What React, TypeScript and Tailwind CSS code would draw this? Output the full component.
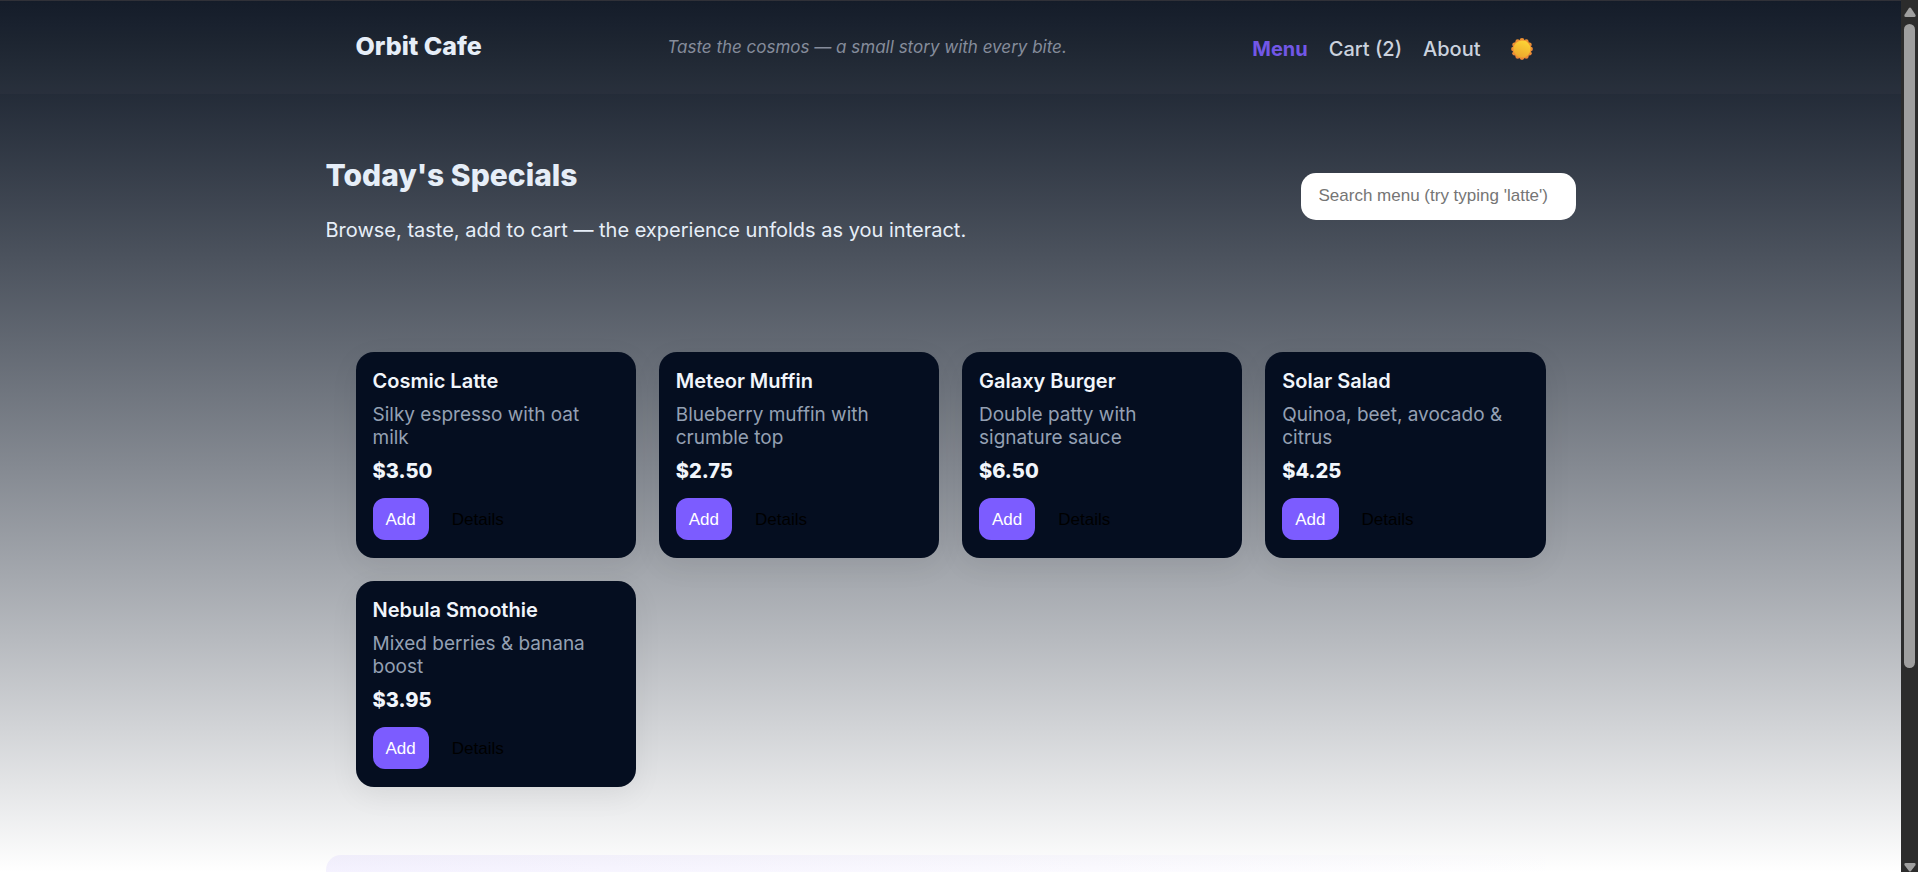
import React from "react";

type Item = { name: string; description: string; price: string };

const items: Item[] = [
  { name: "Cosmic Latte", description: "Silky espresso with oat milk", price: "$3.50" },
  { name: "Meteor Muffin", description: "Blueberry muffin with crumble top", price: "$2.75" },
  { name: "Galaxy Burger", description: "Double patty with signature sauce", price: "$6.50" },
  { name: "Solar Salad", description: "Quinoa, beet, avocado & citrus", price: "$4.25" },
  { name: "Nebula Smoothie", description: "Mixed berries & banana boost", price: "$3.95" },
];

const petals = Array.from({ length: 12 }, (_, i) => {
  const a = (i * Math.PI) / 6;
  return { x: 12 + 8.6 * Math.sin(a), y: 12 - 8.6 * Math.cos(a) };
});

function SunIcon() {
  return (
    <svg viewBox="0 0 24 24" className="size-6" aria-hidden="true">
      <defs>
        <linearGradient id="rays" x1="0" y1="0" x2="0" y2="1">
          <stop offset="0" stopColor="#f0942f" />
          <stop offset="1" stopColor="#e8843a" />
        </linearGradient>
        <linearGradient id="core" x1="0.7" y1="0" x2="0.3" y2="1">
          <stop offset="0" stopColor="#fdd535" />
          <stop offset="1" stopColor="#eba62d" />
        </linearGradient>
      </defs>
      <g fill="url(#rays)">
        <circle cx="12" cy="12" r="9.4" />
        {petals.map((p, i) => (
          <circle key={i} cx={p.x} cy={p.y} r="2.3" />
        ))}
      </g>
      <circle cx="12" cy="12" r="8.6" fill="url(#core)" />
    </svg>
  );
}

function Header() {
  return (
    <header className="border-t border-[#303138] bg-white/[0.025]">
      <div className="mx-auto flex max-w-[1250px] items-center justify-between px-[30px] pt-[30px] pb-8">
        <div className="text-[25px] leading-[31px] font-extrabold text-[#e6eef8]">Orbit Cafe</div>
        <p className="text-[17px] leading-6 text-[#858c9b] italic">
          Taste the cosmos — a small story with every bite.
        </p>
        <nav className="flex items-center gap-[21px] pt-1 text-xl leading-6 font-medium text-[#cbd2de]">
          <a href="#menu" className="font-bold text-[#7257e6]">Menu</a>
          <a href="#cart">Cart (2)</a>
          <a href="#about">About</a>
          <button type="button" aria-label="Toggle theme" className="pr-3 pl-2">
            <SunIcon />
          </button>
        </nav>
      </div>
    </header>
  );
}

function Card({ item }: { item: Item }) {
  return (
    <article className="rounded-[18px] bg-[#050e20] px-[17px] pt-[17px] pb-[18px] shadow-[0_8px_30px_rgba(2,6,23,0.06)]">
      <h3 className="text-xl leading-6 font-semibold text-[#f1f5fb]">{item.name}</h3>
      <p className="mt-[10px] text-[19px] leading-[23px] text-[#94a0b3]">{item.description}</p>
      <div className="mt-[10px] text-xl leading-6 font-extrabold text-[#f1f5fb]">{item.price}</div>
      <div className="mt-[15px] flex gap-[10px] font-['Liberation_Sans',Arial,sans-serif] text-[17px] leading-[19px]">
        <button type="button" className="h-[42px] rounded-xl bg-[#7c5cff] px-[13px] text-white">Add</button>
        <button type="button" className="h-[42px] rounded-xl px-[13px] text-black">Details</button>
      </div>
    </article>
  );
}

function Scrollbar() {
  return (
    <div aria-hidden="true" className="flex w-[17px] shrink-0 flex-col items-center bg-[#2c2c2c] pt-[7px]">
      <svg viewBox="0 0 12 10" className="h-[10px] w-3 shrink-0 fill-[#9f9f9f]">
        <path d="M5 1Q6 0 7 1L11.6 8Q12 10 10.5 10H1.5Q0 10 .4 8Z" />
      </svg>
      <div className="mt-[7px] min-h-0 w-[11px] flex-[644] rounded-full bg-[#9f9f9f]" />
      <div className="min-h-0 flex-[195]" />
      <svg viewBox="0 0 12 9" className="h-[9px] w-3 shrink-0 fill-[#9f9f9f]">
        <path d="M5 8Q6 9 7 8L11.6 2Q12 0 10.5 0H1.5Q0 0 .4 2Z" />
      </svg>
    </div>
  );
}

export default function App() {
  return (
    <div className="flex h-screen overflow-hidden font-[Inter,sans-serif]">
      <div className="min-w-0 flex-1 overflow-hidden bg-linear-to-b from-[#0f1724] to-white">
        <Header />
        <main className="mx-auto max-w-[1250px]">
          <section className="flex items-center justify-between pt-[60px]">
            <div className="text-[#e6eef8]">
              <h1 className="text-[30px] leading-[42px] font-extrabold">Today's Specials</h1>
              <p className="mt-[18px] text-xl leading-8">
                Browse, taste, add to cart — the experience unfolds as you interact.
              </p>
            </div>
            <input
              type="text"
              aria-label="Search menu"
              placeholder="Search menu (try typing 'latte')"
              className="mb-2 h-[47px] w-[275px] rounded-[15px] bg-white px-[18px] font-['Liberation_Sans',Arial,sans-serif] text-[17px] text-black placeholder:text-[#757575]"
            />
          </section>
          <section className="mt-[106px] grid grid-cols-4 gap-x-[23px] gap-y-[23px] px-[30px]">
            {items.map((item) => (
              <Card key={item.name} item={item} />
            ))}
          </section>
          <section className="mt-[68px] h-40 rounded-[15px] bg-linear-to-r from-[#7c5cff]/8 to-transparent" />
        </main>
      </div>
      <Scrollbar />
    </div>
  );
}
